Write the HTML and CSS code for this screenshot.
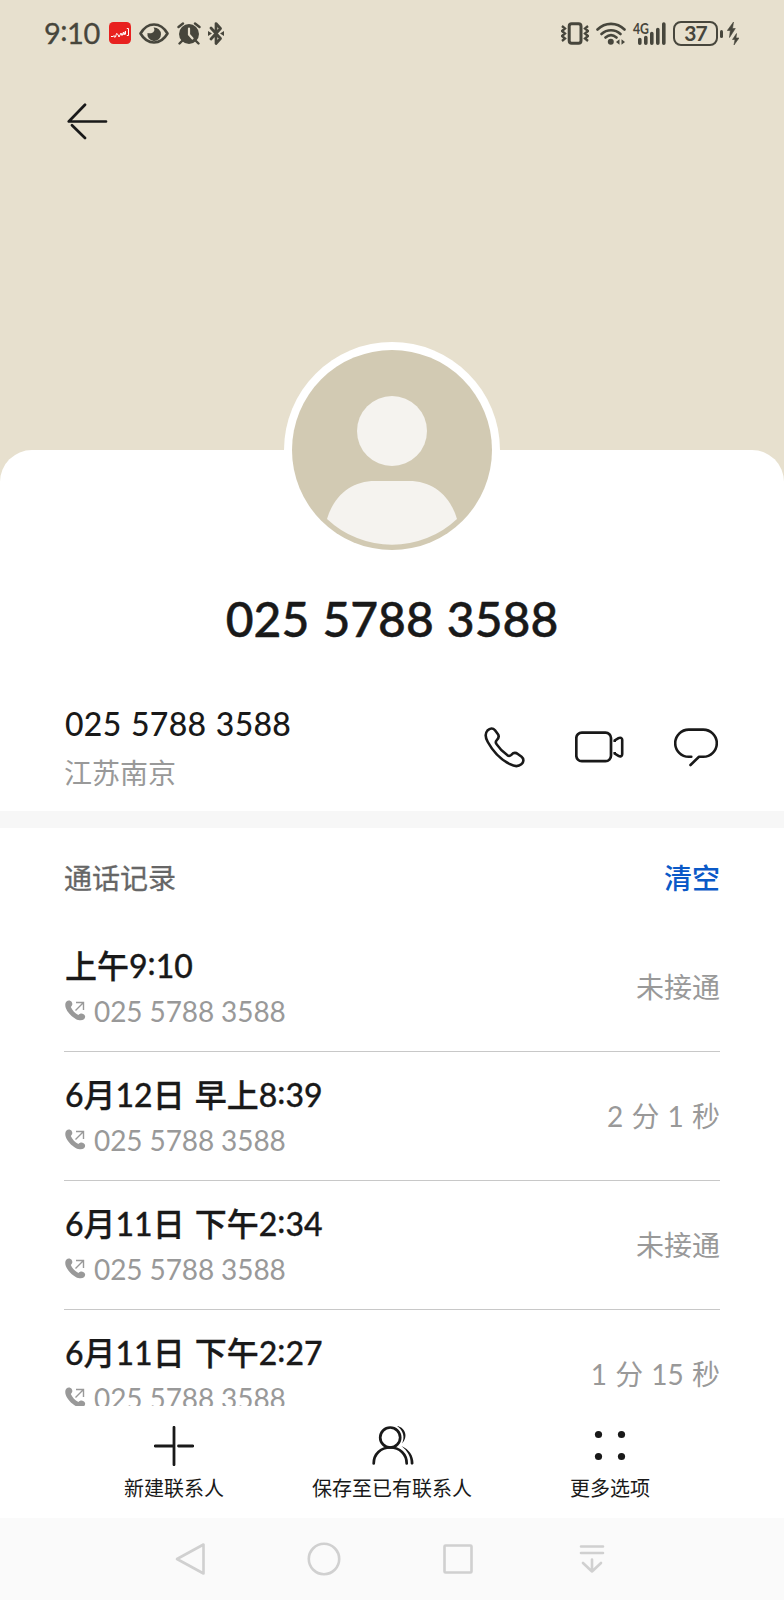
FILE: index.html
```html
<!DOCTYPE html>
<html lang="zh-CN">
<head>
    <meta charset="UTF-8">
    <meta name="viewport" content="width=device-width, initial-scale=1.0">
    <title>联系人详情</title>
    <link rel="stylesheet" href="styles.css">
</head>
<body>
    <div class="phone">
        <header class="hero">
            <div class="status-bar">
                <div class="status-left">
                    <span class="clock">9<span class="colon">:</span>10</span>
                    <svg class="app" width="22" height="22" viewBox="0 0 22 22">
                        <rect width="22" height="22" rx="4.5" fill="#e8211f"/>
                        <path d="M2 14.500h2l1-1v1.500h1.500l1-3.500 1.500 1 1 2.500 2-4 1 2.500 1.500-3.500.5 3 1.500-4v3.500M17.800 6.500h1.700v7h-1.700" fill="none" stroke="#fff" stroke-width="1"/>
                    </svg>
                    <svg class="eye" width="30" height="21" viewBox="0 0 30 21">
                        <path d="M1.500 10.500C5 4.500 9.500 1.500 15 1.500s10 3 13.500 9c-3.500 6-8 9-13.500 9s-10-3-13.500-9z" fill="none" stroke="#47463c" stroke-width="2.600" stroke-linejoin="round"/>
                        <path d="M14.500 4.500c2.500 3-.5 7-6 5.500A6.800 6.800 0 1 0 14.500 4.500z" fill="#47463c"/>
                    </svg>
                    <svg class="alarm" width="24" height="23" viewBox="0 0 24 23">
                        <circle cx="12" cy="12" r="10" fill="#47463c"/>
                        <path d="M1.500 5L6 1.500M22.500 5L18 1.500M5 19l-2.500 2.500M19 19l2.500 2.500" fill="none" stroke="#47463c" stroke-width="2.400" stroke-linecap="round"/>
                        <path d="M12 6.500v6l3.500 4" fill="none" stroke="#e7e0ce" stroke-width="2.200" stroke-linecap="round"/>
                    </svg>
                    <svg class="bluetooth" width="16" height="23" viewBox="0 0 16 23">
                        <path d="M3 6l9.500 10.500L8 21.500v-20l4.500 5L3 17" fill="none" stroke="#47463c" stroke-width="2.700" stroke-linejoin="round" stroke-linecap="round"/>
                        <path d="M0 9l4 2.500L0 14zM16 9l-4 2.500 4 2.500z" fill="#47463c"/>
                    </svg>
                </div>
                <div class="status-right">
                    <svg width="28" height="23" viewBox="0 0 28 23">
                        <rect x="8.200" y="1.800" width="11.800" height="19.500" rx="2.500" fill="none" stroke="#47463c" stroke-width="3"/>
                        <path d="M1 4l3 2.500-3 2.500 3 2.500L1 14l3 2.500L1 19M27 4l-3 2.500 3 2.500-3 2.500 3 2.500-3 2.500 3 2.500" fill="none" stroke="#47463c" stroke-width="2.300"/>
                    </svg>
                    <svg class="wifi" width="30" height="23" viewBox="0 0 30 23">
                        <path d="M1.500 7.500c7.500-7.500 19.500-7.500 27 0M5.500 12c5.500-5 13.500-5 19 0M9.500 15.500c3.500-3 7.500-3 11 0" fill="none" stroke="#47463c" stroke-width="2.600" stroke-linecap="round"/>
                        <circle cx="14.800" cy="19.800" r="3" fill="#47463c"/>
                        <path d="M20 20l3.500-2.800v5.600zM29 20l-3.500-2.800v5.600z" fill="#47463c"/>
                    </svg>
                    <svg class="signal" width="34" height="23" viewBox="0 0 34 23">
                        <text x="0" y="11.500" class="net" textLength="16" lengthAdjust="spacingAndGlyphs">4G</text>
                        <path d="M6.800 17.500v3.800M12.800 15.500v5.800M18.800 11.500v9.800M24.800 7.500v13.800M30.800 2v19.300" stroke="#47463c" stroke-width="3.600" stroke-linecap="round"/>
                    </svg>
                    <div class="battery">37</div>
                    <svg class="bolt" width="12" height="23" viewBox="0 0 12 23">
                        <path d="M6.500 0L.3 8.500h3L2.500 15.500 8.300 6.500H5.500zM9.500 11.500L5.500 17.500h2.500L7 23l5-7H9z" fill="#47463c" stroke="#47463c" stroke-width=".6"/>
                    </svg>
                </div>
            </div>
            <svg class="back" width="42" height="38" viewBox="0 0 42 38">
                <path d="M18 1.800L1.800 18.500H39M5 22.200L18 35" fill="none" stroke="#191919" stroke-width="2.700" stroke-linecap="round" stroke-linejoin="round"/>
            </svg>
        </header>

        <main class="card">
            <svg class="avatar" width="216" height="216" viewBox="0 0 216 216">
                <circle cx="108" cy="108" r="108" fill="#fff"/>
                <circle cx="108" cy="108" r="100" fill="#d2cab3"/>
                <circle cx="108" cy="89" r="35" fill="#f5f3ef"/>
                <path d="M43 177C50 153 68 139 91 139h34c23 0 41 14 48 38a95 95 0 0 1-130 0z" fill="#f5f3ef"/>
            </svg>
            <h1 class="name">025 5788 3588</h1>
            <section class="contact">
                <div>
                    <div class="contact-number">025 5788 3588</div>
                    <div class="contact-place">江苏南京</div>
                </div>
                <div class="contact-actions">
                    <svg width="41" height="41" viewBox="0 0 41 41">
                        <path d="M3.500 3.500C6 .8 9 .8 11 3.300l2.800 3.800c1.500 2 1 4-1 6-1.500 1.500-1.300 2.600-.3 4 3 4.500 6.500 8 11 11.200 1.500 1 2.500.8 3.800-.5 2.200-2.300 4.200-2.500 6.500-.8l3.800 2.800c2.500 2 2.300 5.500-.3 7.500-3 2.500-7 2.200-11.300-.1C16.500 32.500 9 24.500 3.800 15 1 10 .8 6.500 3.500 3.500z" fill="none" stroke="#191919" stroke-width="2.600" stroke-linejoin="round"/>
                    </svg>
                    <svg width="49" height="32" viewBox="0 0 49 32">
                        <rect x="1.300" y="1.600" width="34.700" height="28.600" rx="5.500" fill="none" stroke="#191919" stroke-width="2.700"/>
                        <path d="M39.700 11V9.500l3.800-2.300c1.800-1 3.700-.3 3.700 1.600v14.500c0 2-1.900 2.600-3.700 1.500l-3.800-2.300V21" fill="none" stroke="#191919" stroke-width="2.600"/>
                    </svg>
                    <svg width="44" height="39" viewBox="0 0 44 39">
                        <path d="M17.300 28.800h-2.500a13.600 13.600 0 0 1 0-27.200h14.400a13.600 13.600 0 0 1 0 27.200H25L16.500 37" fill="none" stroke="#191919" stroke-width="2.600" stroke-linecap="round" stroke-linejoin="round"/>
                    </svg>
                </div>
            </section>
            <section class="history">
                <div class="history-head">
                    <span>通话记录</span>
                    <a class="clear">清空</a>
                </div>
                <div class="call">
                    <div>
                        <div class="call-time">上午9<span class="colon">:</span>10</div>
                        <div class="call-number"><svg class="outgoing" width="21" height="21" viewBox="0 0 21 21"><use href="#outgoing"/></svg>025 5788 3588</div>
                    </div>
                    <div class="call-length">未接通</div>
                </div>
                <div class="call">
                    <div>
                        <div class="call-time">6月12日 早上8<span class="colon">:</span>39</div>
                        <div class="call-number"><svg class="outgoing" width="21" height="21" viewBox="0 0 21 21"><use href="#outgoing"/></svg>025 5788 3588</div>
                    </div>
                    <div class="call-length">2 分 1 秒</div>
                </div>
                <div class="call">
                    <div>
                        <div class="call-time">6月11日 下午2<span class="colon">:</span>34</div>
                        <div class="call-number"><svg class="outgoing" width="21" height="21" viewBox="0 0 21 21"><use href="#outgoing"/></svg>025 5788 3588</div>
                    </div>
                    <div class="call-length">未接通</div>
                </div>
                <div class="call">
                    <div>
                        <div class="call-time">6月11日 下午2<span class="colon">:</span>27</div>
                        <div class="call-number"><svg class="outgoing" width="21" height="21" viewBox="0 0 21 21"><use href="#outgoing"/></svg>025 5788 3588</div>
                    </div>
                    <div class="call-length">1 分 15 秒</div>
                </div>
            </section>
        </main>

        <div class="toolbar">
            <div class="tool">
                <svg width="40" height="40" viewBox="0 0 40 40">
                    <path d="M20 1.300v37.400M1.300 20H20M24.500 20h14.200" stroke="#191919" stroke-width="2.800" stroke-linecap="round"/>
                </svg>
                <span>新建联系人</span>
            </div>
            <div class="tool">
                <svg class="people" width="42" height="40" viewBox="0 0 42 40">
                    <circle cx="18.200" cy="11.500" r="10" fill="none" stroke="#191919" stroke-width="2.700"/>
                    <path d="M1.700 37.500c0-9.500 7-16 16.500-16s16.500 6.500 16.500 16" fill="none" stroke="#191919" stroke-width="2.700" stroke-linecap="round"/>
                    <path d="M25 0c8.500 1.500 11.500 11 5 17.500 3-6 1.500-13-5-17.500zM29.500 20c7.500 3.500 12 9.500 12 17.500-.5 1.500-2.500 1.500-2.800 0 .2-7-3.200-12.500-9.200-17.500z" fill="#191919"/>
                </svg>
                <span>保存至已有联系人</span>
            </div>
            <div class="tool">
                <svg width="40" height="40" viewBox="0 0 40 40">
                    <g fill="#191919">
                        <circle cx="8.500" cy="8.500" r="3.600"/>
                        <circle cx="31.500" cy="8.500" r="3.600"/>
                        <circle cx="8.500" cy="30.500" r="3.600"/>
                        <circle cx="31.500" cy="30.500" r="3.600"/>
                    </g>
                </svg>
                <span>更多选项</span>
            </div>
        </div>

        <nav class="nav-bar">
            <svg width="34" height="34" viewBox="0 0 34 34"><path d="M30.500 2.500v29L4 17z" /></svg>
            <svg width="34" height="34" viewBox="0 0 34 34"><circle cx="17" cy="17" r="15.200"/></svg>
            <svg width="34" height="34" viewBox="0 0 34 34"><rect x="3.500" y="3.500" width="27" height="27" rx="1"/></svg>
            <svg width="34" height="34" viewBox="0 0 34 34"><path d="M6 4.500h22M6 11h22M17 17.500v12M8 21l9 8.500 9-8.500"/></svg>
        </nav>
    </div>

    <svg class="symbols">
        <symbol id="outgoing" viewBox="0 0 21 21">
            <path d="M1.500 1.500C3 0 5.500.2 6.700 2c1.200 2 .6 3.500-.9 5 1.800 3.800 4 6 7.600 8 1.500-1.700 3.500-2 5.200-.8 2 1.300 2 3.500.4 5-1.800 1.600-5 1.600-8.300-.3C6.500 16.600 2.500 12.500.8 8 0 5.500 0 3 1.500 1.500z" fill="#999"/>
            <path d="M11 2.500h7.500V10M18 3l-7.500 7.500" fill="none" stroke="#999" stroke-width="1.400"/>
        </symbol>
    </svg>
</body>
</html>
```
FILE: styles.css
```css
body {
    margin: 0;
    background-color: #fff;
    font-family: Lato, "Noto Sans CJK SC", sans-serif;
    color: #191919;
}
.phone {
    display: flex;
    flex-direction: column;
    width: 784px;
    height: 1600px;
    overflow: hidden;
}
.hero {
    height: 490px;
    flex-shrink: 0;
    background-color: #e7e0ce;
}
.status-bar {
    display: flex;
    justify-content: space-between;
    align-items: center;
    height: 66px;
    padding: 0 45px 0 44px;
}
.status-left,
.status-right {
    display: flex;
    align-items: center;
    color: #47463c;
}
.clock {
    width: 65px;
    font-size: 29px;
    line-height: 34px;
    letter-spacing: -0.5px;
    white-space: nowrap;
    -webkit-text-stroke: 0.3px #47463c;
}
.colon {
    vertical-align: 3px;
    line-height: 0;
}
.eye {
    margin-left: 8px;
}
.alarm {
    margin-left: 8px;
}
.bluetooth {
    margin-left: 7px;
}
.wifi {
    margin-left: 7px;
}
.signal {
    margin-left: 7px;
    overflow: visible;
}
.net {
    font-size: 15px;
    font-weight: bold;
    fill: #47463c;
}
.battery {
    position: relative;
    box-sizing: border-box;
    width: 45px;
    height: 25px;
    margin-left: 6px;
    border: 2px solid #47463c;
    border-radius: 8px;
    font-size: 21px;
    font-weight: bold;
    line-height: 20px;
    letter-spacing: -1px;
    text-align: center;
}
.battery::after {
    content: "";
    position: absolute;
    top: 7px;
    right: -7px;
    width: 3px;
    height: 8px;
    border-radius: 2px;
    background-color: #47463c;
}
.bolt {
    margin-left: 9px;
}
.back {
    display: block;
    margin: 37px 0 0 67px;
}
.card {
    display: flex;
    flex-direction: column;
    align-items: center;
    height: 956px;
    margin-top: -40px;
    flex-shrink: 0;
    border-radius: 32px 32px 0 0;
    background-color: #fff;
}
.avatar {
    flex-shrink: 0;
    margin-top: -108px;
}
.name {
    margin: 33px 0 1px;
    font-size: 48px;
    font-weight: 500;
    line-height: 56px;
    word-spacing: 1px;
    -webkit-text-stroke: 0.5px #191919;
}
.contact {
    display: flex;
    justify-content: space-between;
    box-sizing: border-box;
    width: 100%;
    height: 163px;
    padding: 56px 66px 0 64px;
}
.contact-number {
    margin-left: 1px;
    font-size: 32px;
    font-weight: 500;
    line-height: 40px;
    letter-spacing: 0.3px;
    word-spacing: 1px;
}
.contact-place {
    margin-top: 9px;
    font-size: 28px;
    line-height: 40px;
    color: #999;
}
.contact-actions {
    display: flex;
    align-items: center;
    gap: 50px;
    height: 86px;
}
.history {
    box-sizing: border-box;
    width: 100%;
    height: 595px;
    padding: 0 64px;
    border-top: 17px solid #f7f7f7;
    overflow: hidden;
}
.history-head {
    display: flex;
    justify-content: space-between;
    height: 95px;
    font-size: 28px;
    line-height: 101px;
    color: #666;
    -webkit-text-stroke: 0.3px #666;
}
.clear {
    font-weight: 500;
    color: #0a59c7;
    -webkit-text-stroke: 0;
}
.call {
    display: flex;
    justify-content: space-between;
    box-sizing: border-box;
    height: 129px;
    padding-top: 22px;
    border-bottom: 1px solid #c8c8c8;
}
.call-time {
    margin-left: 1px;
    font-size: 32px;
    font-weight: 500;
    line-height: 42px;
    word-spacing: 2px;
    -webkit-text-stroke: 0.3px #191919;
}
.call-number {
    display: flex;
    align-items: center;
    margin-top: 4px;
    font-size: 28px;
    line-height: 40px;
    letter-spacing: -0.1px;
    color: #999;
}
.outgoing {
    margin: 0 8px 2px 1px;
}
.call-length {
    font-size: 28px;
    line-height: 84px;
    word-spacing: 1px;
    color: #999;
}
.toolbar {
    display: flex;
    justify-content: center;
    height: 112px;
    background-color: #fff;
}
.tool {
    display: flex;
    flex-direction: column;
    align-items: center;
    width: 218px;
    padding-top: 20px;
    font-size: 20px;
    line-height: 28px;
}
.tool span {
    margin-top: 8px;
}
.people {
    margin-left: 2px;
}
.nav-bar {
    display: flex;
    justify-content: center;
    align-items: center;
    gap: 100px;
    height: 82px;
    padding-right: 2px;
    background-color: #fafafa;
}
.nav-bar svg {
    fill: none;
    stroke: #d0d0d0;
    stroke-width: 2.6;
    stroke-linecap: round;
    stroke-linejoin: round;
}
.symbols {
    display: none;
}
```
